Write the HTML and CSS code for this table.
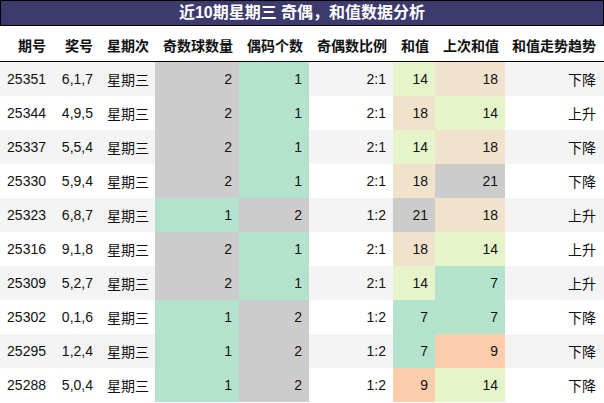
FILE: index.html
```html
<!DOCTYPE html>
<html lang="zh">
<head>
<meta charset="utf-8">
<link rel="stylesheet" href="styles.css">
</head>
<body>
<div class="title">近10期星期三 奇偶，和值数据分析</div>
<table class="data">
<colgroup>
<col class="w1"><col class="w2"><col class="w3"><col class="w4"><col class="w5"><col class="w6"><col class="w7"><col class="w8"><col class="w9">
</colgroup>
<thead>
<tr><th>期号</th><th>奖号</th><th>星期次</th><th>奇数球数量</th><th>偶码个数</th><th>奇偶数比例</th><th>和值</th><th>上次和值</th><th>和值走势趋势</th></tr>
</thead>
<tbody>
<tr><td>25351</td><td>6,1,7</td><td>星期三</td><td class="gray">2</td><td class="green">1</td><td>2:1</td><td class="lime">14</td><td class="tan">18</td><td>下降</td></tr>
<tr><td>25344</td><td>4,9,5</td><td>星期三</td><td class="gray">2</td><td class="green">1</td><td>2:1</td><td class="tan">18</td><td class="lime">14</td><td>上升</td></tr>
<tr><td>25337</td><td>5,5,4</td><td>星期三</td><td class="gray">2</td><td class="green">1</td><td>2:1</td><td class="lime">14</td><td class="tan">18</td><td>下降</td></tr>
<tr><td>25330</td><td>5,9,4</td><td>星期三</td><td class="gray">2</td><td class="green">1</td><td>2:1</td><td class="tan">18</td><td class="gray">21</td><td>下降</td></tr>
<tr><td>25323</td><td>6,8,7</td><td>星期三</td><td class="green">1</td><td class="gray">2</td><td>1:2</td><td class="gray">21</td><td class="tan">18</td><td>上升</td></tr>
<tr><td>25316</td><td>9,1,8</td><td>星期三</td><td class="gray">2</td><td class="green">1</td><td>2:1</td><td class="tan">18</td><td class="lime">14</td><td>上升</td></tr>
<tr><td>25309</td><td>5,2,7</td><td>星期三</td><td class="gray">2</td><td class="green">1</td><td>2:1</td><td class="lime">14</td><td class="green">7</td><td>上升</td></tr>
<tr><td>25302</td><td>0,1,6</td><td>星期三</td><td class="green">1</td><td class="gray">2</td><td>1:2</td><td class="green">7</td><td class="green">7</td><td>下降</td></tr>
<tr><td>25295</td><td>1,2,4</td><td>星期三</td><td class="green">1</td><td class="gray">2</td><td>1:2</td><td class="green">7</td><td class="orange">9</td><td>下降</td></tr>
<tr><td>25288</td><td>5,0,4</td><td>星期三</td><td class="green">1</td><td class="gray">2</td><td>1:2</td><td class="orange">9</td><td class="lime">14</td><td>下降</td></tr>
</tbody>
</table>
</body>
</html>
```
FILE: styles.css
```css
html, body {
  margin: 0;
  padding: 0;
  background: #ffffff;
}
body {
  width: 604px;
  font-family: "Liberation Sans", "Noto Sans CJK SC", sans-serif;
  color: #111111;
}
.title {
  box-sizing: border-box;
  height: 26px;
  background: #3d3b6d;
  border: 1px solid #000000;
  color: #ffffff;
  font-weight: bold;
  font-size: 16px;
  line-height: 23px;
  text-align: center;
}
.data {
  width: 604px;
  border-collapse: collapse;
  table-layout: fixed;
  font-size: 14px;
}
.w1 { width: 52px; }
.w2 { width: 47px; }
.w3 { width: 56px; }
.w4 { width: 84px; }
.w5 { width: 70px; }
.w6 { width: 84px; }
.w7 { width: 42px; }
.w8 { width: 70px; }
.w9 { width: 99px; }
.data th, .data td {
  padding: 0 6px 0 0;
  text-align: right;
  white-space: nowrap;
  overflow: hidden;
}
.data th {
  height: 35px;
  font-weight: bold;
  border-bottom: 1px solid #000000;
  padding-top: 3px;
  box-sizing: border-box;
}
.data td {
  height: 34px;
}
.data td:nth-child(n+4) {
  padding-right: 7px;
}
.data td:last-child, .data th:last-child {
  padding-right: 8px;
}
.data tbody tr:nth-child(odd) {
  background: #f4f4f4;
}
.data tbody tr:nth-child(even) {
  background: #ffffff;
}
.data td.gray { background: #cccccc; }
.data td.green { background: #b3e2cd; }
.data td.lime { background: #e6f5c9; }
.data td.tan { background: #f1e2cc; }
.data td.orange { background: #fdcdac; }
```
